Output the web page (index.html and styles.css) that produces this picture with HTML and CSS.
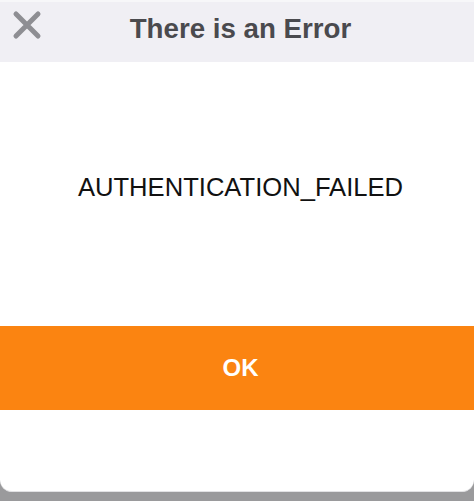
FILE: index.html
```html
<!DOCTYPE html>
<html lang="en">
<head>
    <meta charset="UTF-8">
    <meta name="viewport" content="width=device-width, initial-scale=1.0">
    <title>There is an Error</title>
    <link rel="stylesheet" href="styles.css">
</head>
<body>
    <div class="dialog">
        <header class="dialog-header">
            <button class="close-btn" aria-label="Close">
                <svg width="30" height="30" viewBox="0 0 30 30">
                    <path d="M4 4 L26 26 M26 4 L4 26" stroke="#8e8e93" stroke-width="5" stroke-linecap="round"/>
                </svg>
            </button>
            <h1>There is an Error</h1>
        </header>
        <div class="dialog-message">AUTHENTICATION_FAILED</div>
        <button class="ok-btn">OK</button>
        <div class="dialog-footer"></div>
    </div>
</body>
</html>
```

FILE: styles.css
```css
* {
    margin: 0;
    padding: 0;
    box-sizing: border-box;
}
body {
    font-family: 'Liberation Sans', 'Arial', sans-serif;
    background: #9a9a9c;
    height: 501px;
    overflow: hidden;
}
.dialog {
    background: #ffffff;
    height: 492px;
    border-radius: 0 0 12px 12px;
    display: flex;
    flex-direction: column;
    border-bottom: 1px solid #e2e2e4;
}
.dialog-header {
    position: relative;
    height: 62px;
    background: #f0eff4;
    border-top: 2px solid #f7f7f9;
    display: flex;
    align-items: center;
    justify-content: center;
    padding-left: 7px;
}
.dialog-header h1 {
    font-size: 27.7px;
    font-weight: 700;
    color: #4a4a4e;
    margin-top: -6px;
}
.close-btn {
    position: absolute;
    left: 12px;
    top: 8px;
    background: none;
    border: none;
    width: 30px;
    height: 30px;
}
.dialog-message {
    height: 264px;
    display: flex;
    align-items: center;
    justify-content: center;
    padding-left: 7px;
    padding-bottom: 14px;
    font-size: 25.6px;
    color: #111111;
}
.ok-btn {
    height: 84px;
    border: none;
    background: #fb8411;
    color: #ffffff;
    font-family: inherit;
    font-size: 24px;
    font-weight: 700;
    padding-left: 7px;
}
```
